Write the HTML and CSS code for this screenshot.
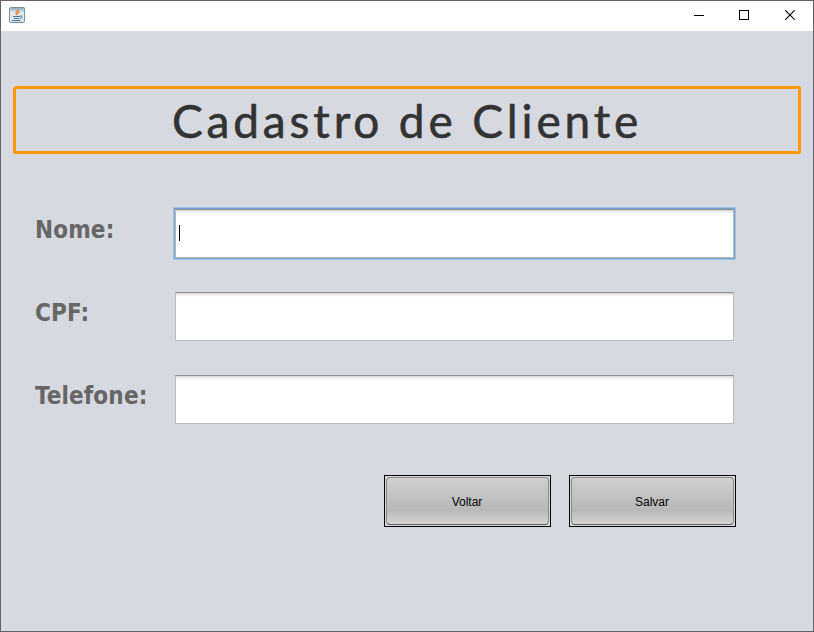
FILE: index.html
```html
<!DOCTYPE html>
<html lang="pt-BR">
<head>
<meta charset="utf-8">
<title>Cadastro de Cliente</title>
<link rel="stylesheet" href="styles.css">
</head>
<body>
<div class="window">
  <header class="titlebar">
    <svg class="app-icon" width="16" height="16" viewBox="0 0 16 16">
      <defs><linearGradient id="tile" x1="0" y1="0" x2="0" y2="1"><stop offset="0" stop-color="#8ba8ba"/><stop offset=".35" stop-color="#e6edf1"/><stop offset="1" stop-color="#d5e0e6"/></linearGradient></defs>
      <rect x=".5" y=".5" width="15" height="15" rx="1" fill="url(#tile)" stroke="#7590a3"/>
      <path d="M9.500 2c.4 2-3.200 2.500-2.500 4.200.2.600 1 1 .8 2M10.600 4.700c-1.800.8-1.900 1.500-1.200 2.200" fill="none" stroke="#e57a25" stroke-width="1.300"/>
      <path d="M4 9.500h7M5 11.500h5M3 13.500h8.500M11 9c2.800-.7 2.500 1.800 0 2.500" fill="none" stroke="#48779a"/>
    </svg>
    <svg class="controls" width="101" height="11" viewBox="0 0 101 11" fill="none" stroke="#000">
      <path d="M0 5.500h10"/>
      <rect x="45.500" y=".5" width="9" height="9"/>
      <path d="M91.300.3l9.400 9.400M100.700.3l-9.400 9.400" stroke-width="1.100"/>
    </svg>
  </header>
  <main class="content">
    <h1 class="heading"><span>Cadastro de Cliente</span></h1>
    <form class="form">
      <label class="label">Nome:</label>
      <div class="field focused"><span class="caret"></span></div>
      <label class="label">CPF:</label>
      <div class="field"></div>
      <label class="label">Telefone:</label>
      <div class="field"></div>
    </form>
    <div class="actions">
      <button class="button" type="button"><span>Voltar</span></button>
      <button class="button" type="button"><span>Salvar</span></button>
    </div>
  </main>
</div>
</body>
</html>
```
FILE: styles.css
```css
* { box-sizing: border-box; }
body { margin: 0; }
.window {
  width: 814px;
  height: 632px;
  border: 1px solid #606265;
  background: #d6d9e0;
  overflow: hidden;
}
.titlebar {
  height: 30px;
  padding: 0 18px 0 8px;
  display: flex;
  align-items: flex-start;
  justify-content: space-between;
  background: #fff;
}
.app-icon { margin-top: 6px; }
.controls { margin-top: 9px; }
.content { padding: 55px 12px 0; }
.heading {
  height: 68px;
  margin: 0;
  padding-top: 2px;
  border: 3px solid #ff9900;
  border-radius: 4px 2px 2px 2px;
  display: flex;
  justify-content: center;
  align-items: center;
  font: 400 46px/62px Lato, sans-serif;
  letter-spacing: 3.85px;
  color: #333;
  -webkit-text-stroke: 0.6px #333;
  white-space: nowrap;
}
.form {
  display: grid;
  grid-template-columns: 140px 559px;
  grid-template-rows: repeat(3, 49px);
  row-gap: 34px;
  margin: 55px 0 0 22px;
}
.label {
  font: bold 24px/28px "DejaVu Sans Condensed", "DejaVu Sans", sans-serif;
  font-stretch: condensed;
  color: #666;
  letter-spacing: 0.15px;
  padding-top: 7px;
  white-space: nowrap;
}
.field {
  background: linear-gradient(#d4d4d4, #f0f0f0 2px, #fff 4px);
  border: 1px solid #b8babd;
  border-top-color: #8d8e91;
}
.focused { box-shadow: 0 0 0 1px #73a4d1, 0 0 0 2px #a3c0de; }
.caret {
  display: block;
  width: 1px;
  height: 16px;
  margin: 15px 0 0 3px;
  background: #000;
}
.actions {
  display: flex;
  gap: 18px;
  margin: 51px 0 0 371px;
}
.button {
  width: 167px;
  height: 52px;
  padding: 1px;
  border: 1px solid #000;
  background: #d6d9e0;
  font: 12px "Liberation Sans", sans-serif;
  color: #000;
}
.button span {
  display: flex;
  height: 48px;
  align-items: center;
  justify-content: center;
  padding: 2px 1px 0 0;
  border: 1px solid #86888c;
  border-bottom-color: #5a5c60;
  border-radius: 4px;
  background: linear-gradient(#d0d0d0, #c0c0c0 45%, #b8b8b8 70%, #d5d5d5);
}
```
